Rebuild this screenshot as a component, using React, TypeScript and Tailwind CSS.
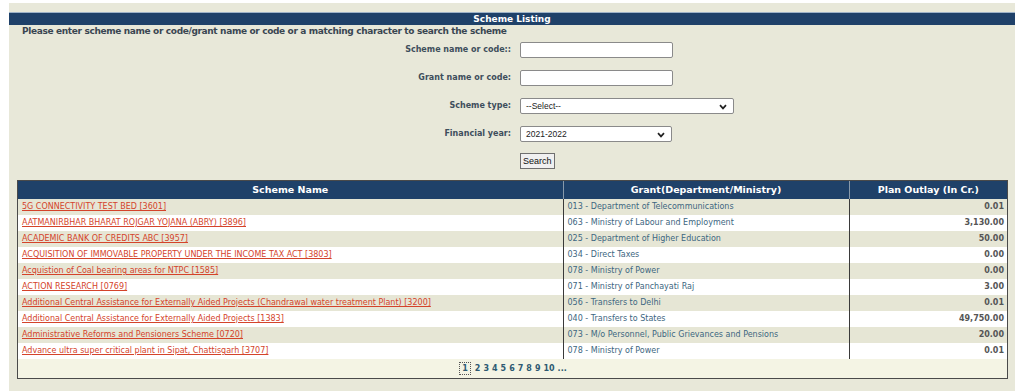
import React from 'react'

// ─────────────────────────────────────────────────
// Data
// ─────────────────────────────────────────────────

interface SchemeRow {
  name: string
  grant: string
  outlay: string
}

const rows: SchemeRow[] = [
  { name: '5G CONNECTIVITY TEST BED [3601]', grant: '013 - Department of Telecommunications', outlay: '0.01' },
  { name: 'AATMANIRBHAR BHARAT ROJGAR YOJANA (ABRY) [3896]', grant: '063 - Ministry of Labour and Employment', outlay: '3,130.00' },
  { name: 'ACADEMIC BANK OF CREDITS ABC [3957]', grant: '025 - Department of Higher Education', outlay: '50.00' },
  { name: 'ACQUISITION OF IMMOVABLE PROPERTY UNDER THE INCOME TAX ACT [3803]', grant: '034 - Direct Taxes', outlay: '0.00' },
  { name: 'Acquistion of Coal bearing areas for NTPC [1585]', grant: '078 - Ministry of Power', outlay: '0.00' },
  { name: 'ACTION RESEARCH [0769]', grant: '071 - Ministry of Panchayati Raj', outlay: '3.00' },
  { name: 'Additional Central Assistance for Externally Aided Projects (Chandrawal water treatment Plant) [3200]', grant: '056 - Transfers to Delhi', outlay: '0.01' },
  { name: 'Additional Central Assistance for Externally Aided Projects [1383]', grant: '040 - Transfers to States', outlay: '49,750.00' },
  { name: 'Administrative Reforms and Pensioners Scheme [0720]', grant: '073 - M/o Personnel, Public Grievances and Pensions', outlay: '20.00' },
  { name: 'Advance ultra super critical plant in Sipat, Chattisgarh [3707]', grant: '078 - Ministry of Power', outlay: '0.01' },
]

const pages = ['2', '3', '4', '5', '6', '7', '8', '9', '10', '...']

// ─────────────────────────────────────────────────
// Bits
// ─────────────────────────────────────────────────

function Chevron() {
  return (
    <svg width="8" height="6" viewBox="0 0 8 6" className="absolute right-[6px] top-[5px]">
      <path d="M1 1.2 L4 4.4 L7 1.2" fill="none" stroke="#222" strokeWidth="1.7" />
    </svg>
  )
}

function FormRow({ label, children }: { label: string; children: React.ReactNode }) {
  return (
    <div className="flex items-center h-[16px]">
      <div className="w-[502px] text-right text-[8px] font-bold text-[#3e4e5c]">{label}</div>
      <div className="ml-[9px]">{children}</div>
    </div>
  )
}

function TextBox({ width }: { width: string }) {
  return <div className={`${width} h-[16px] bg-white border border-[#8a8a8a] rounded-[2px]`} />
}

function SelectBox({ width, value }: { width: string; value: string }) {
  return (
    <div
      className={`${width} relative h-[16px] bg-white border border-[#8a8a8a] rounded-[2px] pl-[5px] text-[8.5px] leading-[14px] text-[#222]`}
      style={{ fontFamily: '"Liberation Sans", Arial, sans-serif' }}
    >
      {value}
      <Chevron />
    </div>
  )
}

// ─────────────────────────────────────────────────
// Component
// ─────────────────────────────────────────────────

export default function App() {
  return (
    <div
      className="w-[1024px] h-[391px] bg-white pl-[9px] pr-[9px] pt-[3px] overflow-hidden"
      style={{ fontFamily: '"DejaVu Sans", Verdana, sans-serif' }}
    >
      <div className="h-[388px] bg-[#e8e8d9] pt-[9px]">
        {/* Title bar */}
        <div className="h-[13px] bg-[#1f4169] border-t border-[#9fb3c8] text-center text-white text-[9px] font-bold leading-[12px]">
          Scheme Listing
        </div>

        {/* Hint */}
        <div className="pl-[13px] mt-[1px] text-[9px] tracking-[-0.35px] font-bold leading-[11px] text-[#3a4652]">
          Please enter scheme name or code/grant name or code or a matching character to search the scheme
        </div>

        {/* Search form */}
        <div className="flex flex-col gap-[12px] mt-[5px]">
          <FormRow label="Scheme name or code::">
            <TextBox width="w-[153px]" />
          </FormRow>
          <FormRow label="Grant name or code:">
            <TextBox width="w-[153px]" />
          </FormRow>
          <FormRow label="Scheme type:">
            <SelectBox width="w-[214px]" value="--Select--" />
          </FormRow>
          <FormRow label="Financial year:">
            <SelectBox width="w-[152px]" value="2021-2022" />
          </FormRow>
          <div className="flex h-[16px] mt-[-1px]">
            <div className="w-[511px]" />
            <div
              className="h-[16px] px-[2px] border border-[#6f6f6f] bg-[#f0f0f0] text-[9px] leading-[14px] text-[#111]"
              style={{ fontFamily: '"Liberation Sans", Arial, sans-serif' }}
            >
              Search
            </div>
          </div>
        </div>

        {/* Results table */}
        <div className="mx-[8px] mt-[11px] w-[991px] border border-[#4a4a4a]">
          <table className="w-full border-collapse table-fixed">
            <colgroup>
              <col className="w-[545px]" />
              <col className="w-[286px]" />
              <col />
            </colgroup>
            <thead>
              <tr className="h-[18px] bg-[#1f4169] text-white text-[9.5px] font-bold">
                <th className="border-r border-[#8899aa] text-center">Scheme Name</th>
                <th className="border-r border-[#8899aa] text-center">Grant(Department/Ministry)</th>
                <th className="text-center">Plan Outlay (In Cr.)</th>
              </tr>
            </thead>
            <tbody>
              {rows.map((r, i) => (
                <tr key={i} className={`h-[16px] text-[8px] ${i % 2 === 0 ? 'bg-[#e6e6d5]' : 'bg-white'}`}>
                  <td className="pl-[4px] border-r border-[#3a3a3a] whitespace-nowrap">
                    <span className="text-[#d4432a] underline">{r.name}</span>
                  </td>
                  <td className="pl-[4px] border-r border-[#3a3a3a] text-[#3d6681] whitespace-nowrap">{r.grant}</td>
                  <td className="pr-[3px] text-right font-bold text-[#555]">{r.outlay}</td>
                </tr>
              ))}
            </tbody>
          </table>

          {/* Pager */}
          <div className="h-[19px] bg-[#f4f4e4] flex items-center justify-center gap-[3px] pl-[1px] text-[8px] font-bold text-[#2e5a72]">
            <span className="px-[2px] mr-[1px] border border-dotted border-[#555] leading-[11px]">1</span>
            {pages.map((p) => (
              <span key={p}>{p}</span>
            ))}
          </div>
        </div>
      </div>
    </div>
  )
}
